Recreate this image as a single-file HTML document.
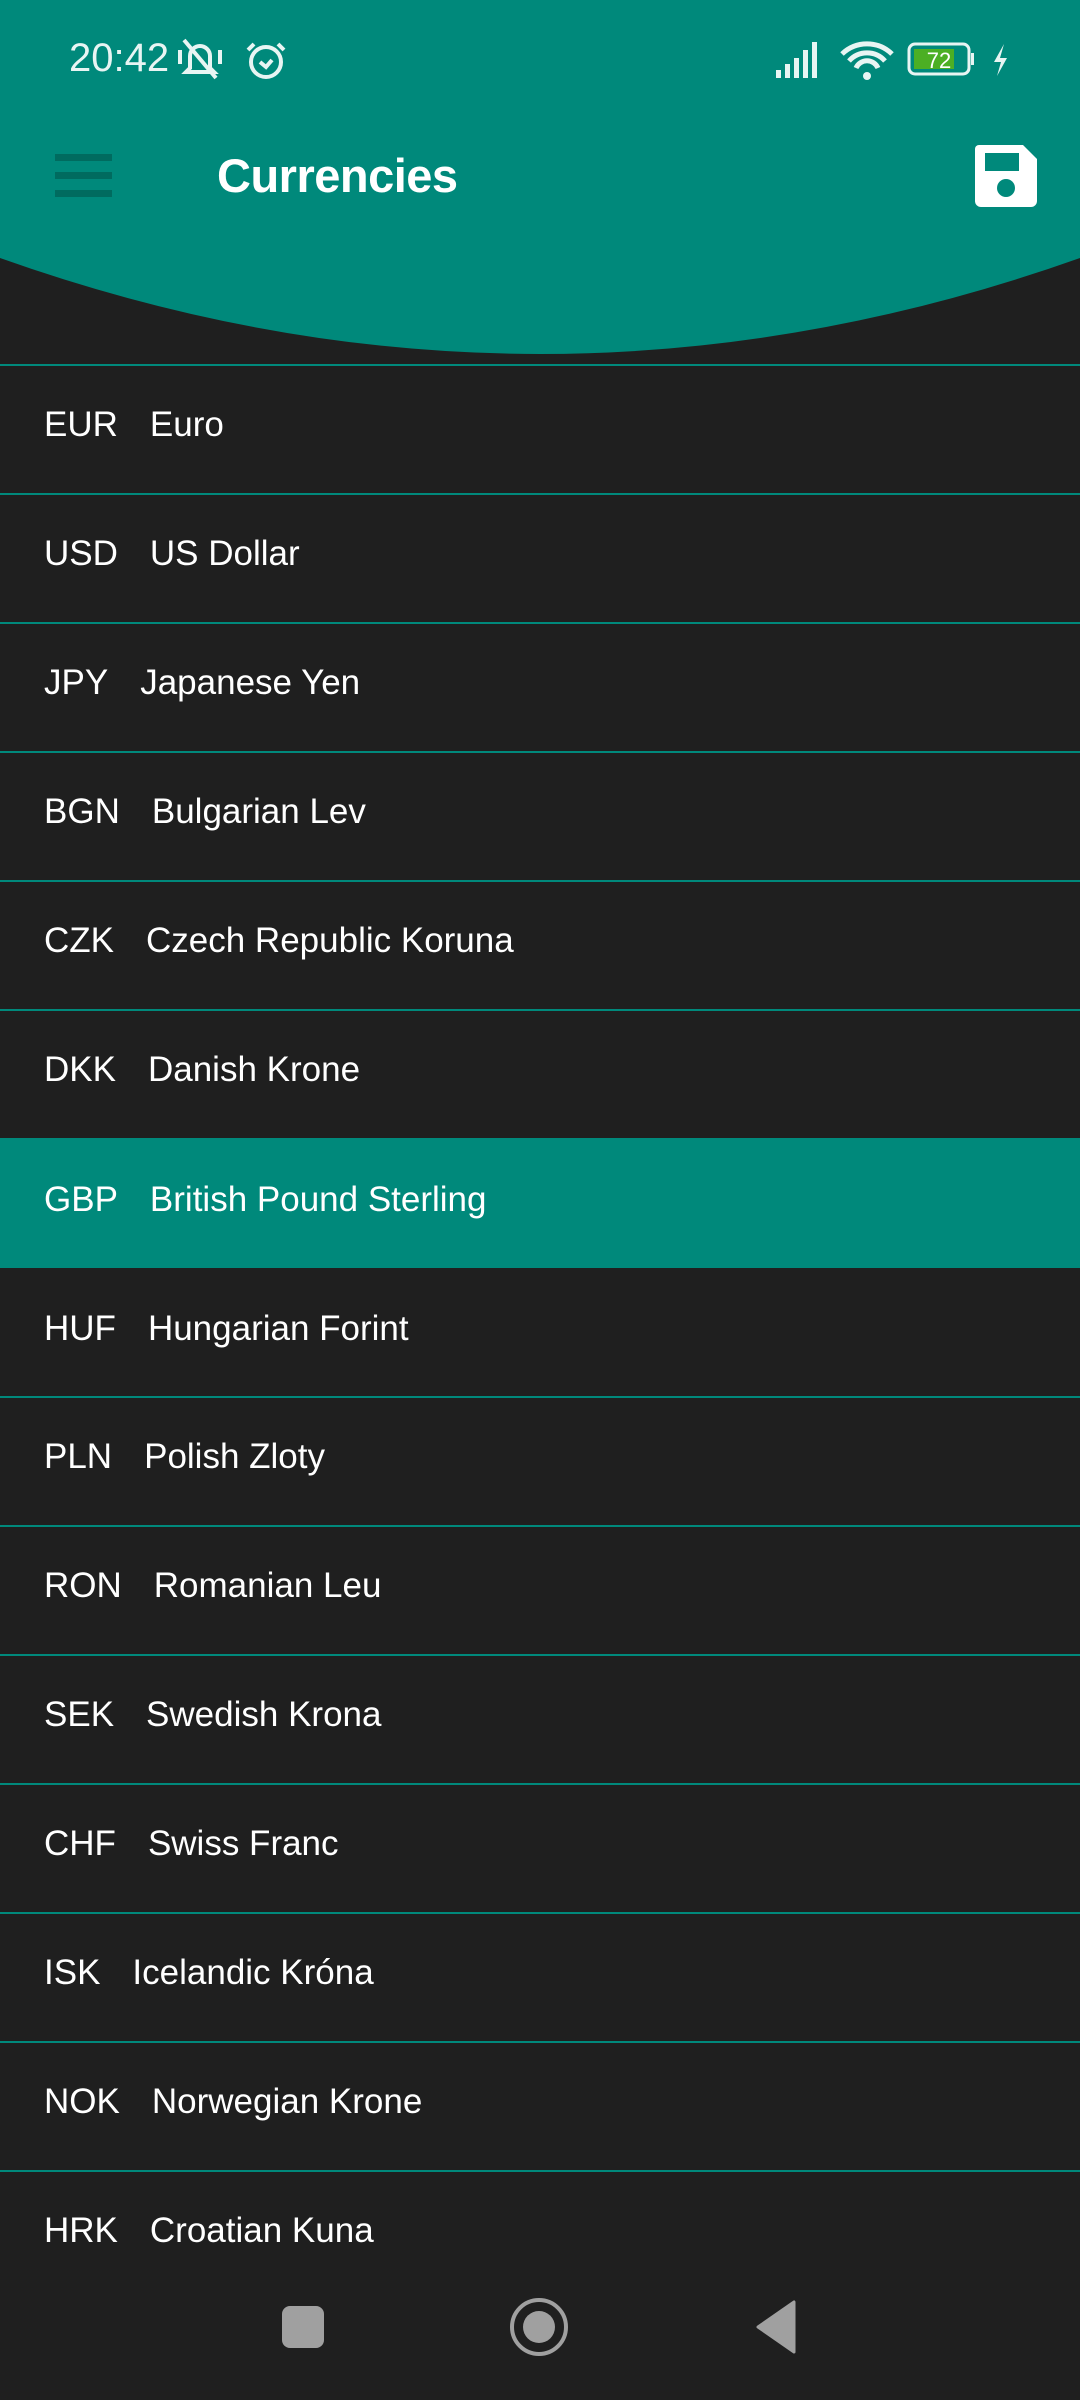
<!DOCTYPE html>
<html><head><meta charset="utf-8"><style>
html,body{margin:0;padding:0;}
body{width:1080px;height:2400px;background:#1f1f1f;position:relative;overflow:hidden;font-family:"Liberation Sans",sans-serif;color:#fff;}
.hdr{position:absolute;left:0;top:0;width:1080px;height:360px;}
.row{position:absolute;left:0;width:1080px;height:127px;border-top:2px solid #00897b;display:flex;align-items:center;font-size:35px;box-sizing:border-box;padding-bottom:8px;}
.row .c{margin-left:44px;margin-right:32px;}
.sel{background:#00897b;}
</style></head><body>
<svg class="hdr" width="1080" height="360" viewBox="0 0 1080 360">
<path d="M0 0H1080V258Q540 450 0 258Z" fill="#00897b"/>
</svg>
<div style="position:absolute;left:69px;top:36px;font-size:40px;color:#e8f5f3;">20:42</div>
<svg style="position:absolute;left:178px;top:36px" width="110" height="48" viewBox="0 0 110 48">
<g stroke="#e8f5f3" stroke-width="4" fill="none">
<path d="M12 32V20a10 10 0 0 1 20 0v12l4 4H8z"/><path d="M6 4L38 42"/><path d="M2 14v14M42 14v14"/>
<circle cx="88" cy="26" r="15"/><path d="M82 26l6 5 6-7M76 8l-6 6M100 8l6 6"/>
</g></svg>
<svg style="position:absolute;left:774px;top:38px" width="240" height="42" viewBox="0 0 240 42">
<g fill="#e8f5f3"><rect x="2" y="32" width="5" height="8"/><rect x="11" y="26" width="5" height="14"/><rect x="20" y="20" width="5" height="20"/><rect x="29" y="12" width="5" height="28"/><rect x="38" y="4" width="5" height="36"/></g>
<path d="M68 16a36 36 0 0 1 50 0M75 23a24 24 0 0 1 36 0M82 30a12 12 0 0 1 22 0" stroke="#e8f5f3" stroke-width="5" fill="none"/><circle cx="93" cy="38" r="4" fill="#e8f5f3"/>
<rect x="135" y="6" width="60" height="30" rx="6" fill="none" stroke="#e8f5f3" stroke-width="3"/><rect x="140" y="11" width="40" height="20" fill="#4caf24"/><rect x="197" y="15" width="3" height="12" fill="#e8f5f3"/>
<text x="165" y="30" font-size="22" fill="#fff" text-anchor="middle" font-family="Liberation Sans">72</text>
<path d="M230 6l-10 18h7l-4 14 10-18h-7z" fill="#e8f5f3"/>
</svg>
<div style="position:absolute;left:55px;top:154px;width:57px;height:7px;background:#006b5f;"></div>
<div style="position:absolute;left:55px;top:172px;width:57px;height:7px;background:#006b5f;"></div>
<div style="position:absolute;left:55px;top:190px;width:57px;height:7px;background:#006b5f;"></div>
<div style="position:absolute;left:217px;top:148px;font-size:47px;font-weight:bold;letter-spacing:-0.5px;">Currencies</div>
<svg style="position:absolute;left:975px;top:145px" width="62" height="62" viewBox="0 0 62 62">
<path d="M4 0H48L62 14V56a6 6 0 0 1-6 6H6a6 6 0 0 1-6-6V4a4 4 0 0 1 4-4z" fill="#fff"/>
<rect x="10" y="8" width="34" height="18" fill="#00897b"/><circle cx="31" cy="43" r="9" fill="#00897b"/>
</svg>
<div class="row" style="top:364px"><span class="c">EUR</span>Euro</div>
<div class="row" style="top:493px"><span class="c">USD</span>US Dollar</div>
<div class="row" style="top:622px"><span class="c">JPY</span>Japanese Yen</div>
<div class="row" style="top:751px"><span class="c">BGN</span>Bulgarian Lev</div>
<div class="row" style="top:880px"><span class="c">CZK</span>Czech Republic Koruna</div>
<div class="row" style="top:1009px"><span class="c">DKK</span>Danish Krone</div>
<div class="row sel" style="top:1138px;height:130px"><span class="c">GBP</span>British Pound Sterling</div>
<div class="row" style="top:1268px;border-top-color:transparent"><span class="c">HUF</span>Hungarian Forint</div>
<div class="row" style="top:1396px"><span class="c">PLN</span>Polish Zloty</div>
<div class="row" style="top:1525px"><span class="c">RON</span>Romanian Leu</div>
<div class="row" style="top:1654px"><span class="c">SEK</span>Swedish Krona</div>
<div class="row" style="top:1783px"><span class="c">CHF</span>Swiss Franc</div>
<div class="row" style="top:1912px"><span class="c">ISK</span>Icelandic Króna</div>
<div class="row" style="top:2041px"><span class="c">NOK</span>Norwegian Krone</div>
<div class="row" style="top:2170px"><span class="c">HRK</span>Croatian Kuna</div>
<div style="position:absolute;left:0;top:2270px;width:1080px;height:130px;background:#1f1f1f;"></div>
<div style="position:absolute;left:282px;top:2306px;width:42px;height:42px;border-radius:8px;background:#a0a0a0;"></div>
<div style="position:absolute;left:510px;top:2298px;width:50px;height:50px;border-radius:50%;border:4px solid #a0a0a0;"></div>
<div style="position:absolute;left:523px;top:2311px;width:32px;height:32px;border-radius:50%;background:#a0a0a0;"></div>
<svg style="position:absolute;left:754px;top:2300px" width="44" height="54" viewBox="0 0 44 54"><path d="M40 2V52L4 27z" fill="#a0a0a0" stroke="#a0a0a0" stroke-width="3" stroke-linejoin="round"/></svg>
</body></html>
